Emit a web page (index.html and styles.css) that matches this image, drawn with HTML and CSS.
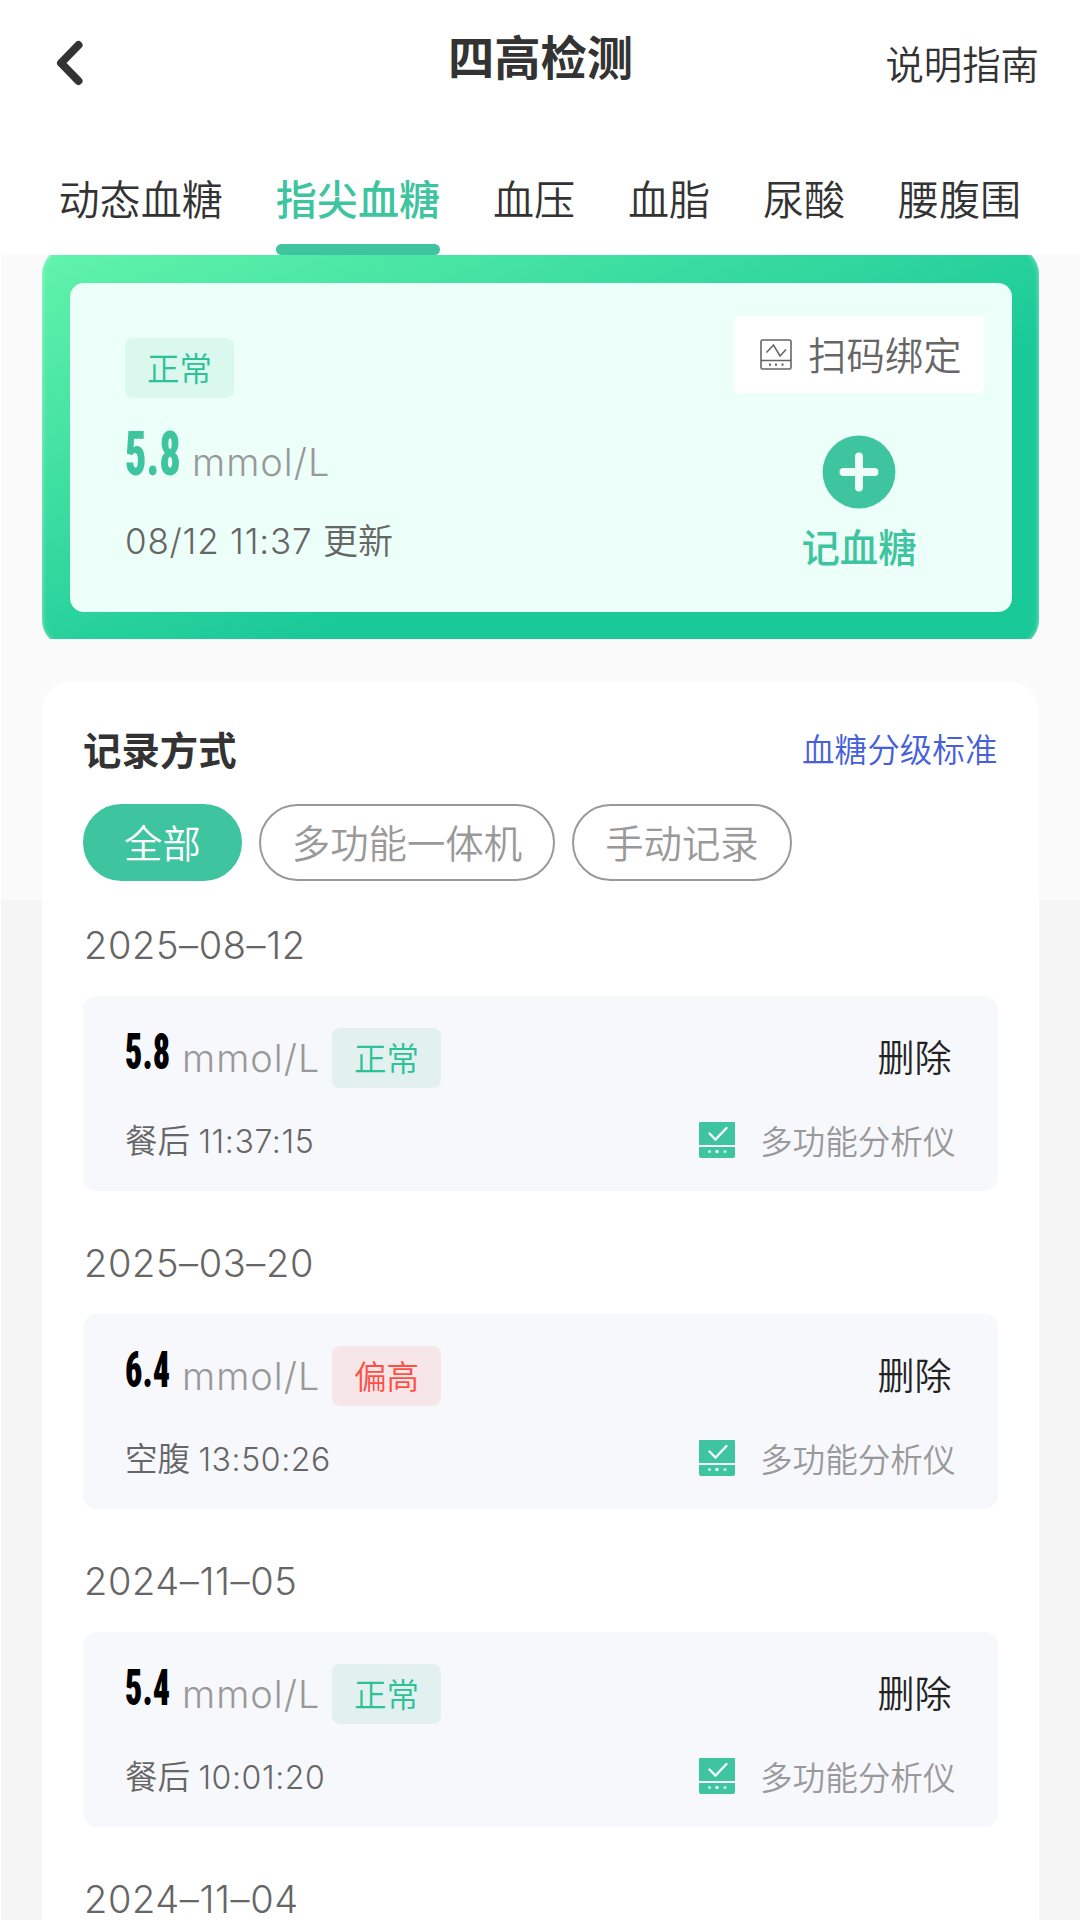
FILE: index.html
```html
<!DOCTYPE html>
<html lang="zh-CN">
<head>
    <meta charset="UTF-8">
    <meta name="viewport" content="width=device-width, initial-scale=1.0">
    <title>四高检测</title>
    <link rel="stylesheet" href="styles.css">
</head>
<body>
    <!-- shared icon for the record rows -->
    <svg class="sprite" width="0" height="0">
        <symbol id="device" viewBox="0 0 38 38">
            <path d="M2 1h34a1 1 0 0 1 1 1v22H1V2a1 1 0 0 1 1-1zM1 26h36v9a2 2 0 0 1-2 2H3a2 2 0 0 1-2-2z" fill="#3ec49f"/>
            <path d="M11.5 12.5l6 6L28.5 7" fill="none" stroke="#f7f8fc" stroke-width="2.4" stroke-linecap="round"/>
            <circle cx="11.5" cy="30.5" r="1.6" fill="#c5ede2"/>
            <circle cx="19" cy="30.5" r="1.8" fill="#e5f7f3"/>
            <circle cx="27" cy="30.5" r="1.6" fill="#c5ede2"/>
        </symbol>
    </svg>
    <header class="header">
        <div class="navbar">
            <a class="back">
                <svg width="32" height="50" viewBox="0 0 32 50"><path d="M24.500 7L7 25L24.500 43" fill="none" stroke="#333" stroke-width="8" stroke-linecap="round" stroke-linejoin="round"/></svg>
            </a>
            <h1>四高检测</h1>
            <a class="guide">说明指南</a>
        </div>
        <nav class="tabs">
            <a>动态血糖</a>
            <a class="active">指尖血糖</a>
            <a>血压</a>
            <a>血脂</a>
            <a>尿酸</a>
            <a>腰腹围</a>
        </nav>
    </header>
    <main class="main">
        <section class="summary">
            <div class="summary-inner">
                <div class="summary-left">
                    <span class="tag">正常</span>
                    <div class="reading"><span class="value"><b>5.8</b></span><span class="unit">mmol/L</span></div>
                    <div class="updated">08/12 11:37 <span>更新</span></div>
                </div>
                <div class="summary-right">
                    <a class="scan">
                        <svg width="32" height="32" viewBox="0 0 32 32" fill="none" stroke="#666" stroke-width="1.6">
                            <rect x="1" y="1" width="30" height="29" rx="1.500"/>
                            <path d="M1 21.500h30M6.500 13.500l7-7.500 6.500 11 6-6.500"/>
                            <path d="M9 25.700h2M15 25.700h2M21.500 25.700h2" stroke-width="2.2"/>
                        </svg>
                        <span>扫码绑定</span>
                    </a>
                    <a class="add">
                        <svg width="74" height="74" viewBox="0 0 74 74">
                            <circle cx="37" cy="37" r="36.400" fill="#3ec49f"/>
                            <path d="M37 21.500v31M21.500 37h31" stroke="#edfff9" stroke-width="8" stroke-linecap="round"/>
                        </svg>
                        <span>记血糖</span>
                    </a>
                </div>
            </div>
        </section>
        <section class="records">
            <div class="records-head">
                <h2>记录方式</h2>
                <a>血糖分级标准</a>
            </div>
            <div class="filters">
                <a class="active">全部</a>
                <a>多功能一体机</a>
                <a>手动记录</a>
            </div>
            <h3 class="date">2025–08–12</h3>
            <div class="record">
                <div class="row">
                    <span class="value"><b>5.8</b></span><span class="unit">mmol/L</span><span class="tag">正常</span>
                    <a class="delete">删除</a>
                </div>
                <div class="row row-info">
                    <span class="time">餐后 <i>11:37:15</i></span>
                    <span class="source"><svg width="38" height="38"><use href="#device"/></svg>多功能分析仪</span>
                </div>
            </div>
            <h3 class="date">2025–03–20</h3>
            <div class="record">
                <div class="row">
                    <span class="value"><b>6.4</b></span><span class="unit">mmol/L</span><span class="tag high">偏高</span>
                    <a class="delete">删除</a>
                </div>
                <div class="row row-info">
                    <span class="time">空腹 <i>13:50:26</i></span>
                    <span class="source"><svg width="38" height="38"><use href="#device"/></svg>多功能分析仪</span>
                </div>
            </div>
            <h3 class="date">2024–11–05</h3>
            <div class="record">
                <div class="row">
                    <span class="value"><b>5.4</b></span><span class="unit">mmol/L</span><span class="tag">正常</span>
                    <a class="delete">删除</a>
                </div>
                <div class="row row-info">
                    <span class="time">餐后 <i>10:01:20</i></span>
                    <span class="source"><svg width="38" height="38"><use href="#device"/></svg>多功能分析仪</span>
                </div>
            </div>
            <h3 class="date">2024–11–04</h3>
        </section>
    </main>
</body>
</html>
```

FILE: styles.css
```css
* {
    box-sizing: border-box;
}
body {
    margin: 0;
    width: 1080px;
    height: 1920px;
    overflow: hidden;
    font-family: "Noto Sans CJK SC", sans-serif;
    font-size: 38.4px;
    font-weight: 350;
    color: #333;
    background-color: #fff;
}
h1, h2, h3 {
    margin: 0;
}
svg {
    display: block;
    flex-shrink: 0;
}
.sprite {
    display: none;
}
.header {
    height: 255px;
    background-color: #fff;
}
.navbar {
    display: grid;
    grid-template-columns: 1fr auto 1fr;
    height: 128px;
    padding: 0 41px 0 54px;
    align-items: center;
}
.navbar h1 {
    font-size: 46.3px;
    line-height: 60px;
    padding-bottom: 19px;
    margin-left: -12px;
}
.navbar .guide {
    justify-self: end;
    padding-bottom: 4px;
    line-height: 50px;
}
.back {
    padding-bottom: 2px;
}
.tabs {
    display: flex;
    gap: 52.8px;
    height: 127px;
    padding: 0 0 0 58.5px;
}
.tabs a {
    display: flex;
    flex-direction: column;
    justify-content: space-between;
    line-height: 60px;
    padding-top: 39px;
    font-size: 41.1px;
    white-space: nowrap;
}
.tabs .active {
    color: #3ec49f;
    font-weight: 500;
}
.tabs .active::after {
    content: "";
    height: 11px;
    border-radius: 6px;
    background-color: #3ec49f;
}
.main {
    margin-left: 1px;
    padding: 0 41px;
    height: 1665px;
    background: linear-gradient(#fafafa 645px, #f5f5f5 645px);
}
.summary {
    position: relative;
    height: 384px;
    padding: 28px 27px 27px 28px;
    overflow: hidden;
}
/* gradient frame runs a little past the clipped top and bottom */
.summary::before {
    content: "";
    position: absolute;
    inset: -8px 0;
    border-radius: 27px;
    background: linear-gradient(to bottom right, #62f4ab, #1ac998 62%);
    box-shadow: inset 0 0 5px rgba(255, 255, 255, 0.5);
}
.summary-inner {
    position: relative;
    display: flex;
    justify-content: space-between;
    height: 329px;
    padding: 33px 28px 0 55px;
    border-radius: 14px;
    background-color: #edfff9;
}
.summary-left {
    padding-top: 22px;
}
.tag {
    display: block;
    width: 109px;
    height: 60px;
    border-radius: 8px;
    background-color: #dbf8ee;
    color: #2cc196;
    font-size: 32.5px;
    line-height: 57px;
    text-align: center;
}
.reading {
    display: flex;
    height: 110px;
    color: #3ec49f;
}
/* condensed digits */
.value {
    width: 67px;
    font-family: Roboto, sans-serif;
    font-size: 62px;
    line-height: 112px;
}
.value b {
    display: inline-block;
    font-weight: 900;
    font-stretch: 75%;
    transform: scaleX(0.68);
    transform-origin: left;
}
.unit {
    color: #999;
    font-family: Inter, sans-serif;
    font-weight: 350;
    font-size: 38px;
    line-height: 128px;
    letter-spacing: 1px;
}
.updated {
    color: #666;
    font-family: Inter, "Noto Sans CJK SC", sans-serif;
    font-weight: 350;
    font-size: 35px;
    line-height: 66px;
    letter-spacing: 0.8px;
}
.updated span {
    letter-spacing: 0;
}
.scan {
    display: flex;
    align-items: center;
    width: 250px;
    height: 77px;
    padding-left: 26px;
    gap: 16px;
    border-radius: 5px;
    background-color: #fff;
    color: #666;
    line-height: 73px;
}
.scan span {
    padding-bottom: 3px;
}
.add {
    display: flex;
    flex-direction: column;
    align-items: center;
    padding-top: 42px;
    color: #3ec49f;
    font-weight: 500;
    line-height: 72px;
}
.records {
    height: 1240px;
    margin-top: 42px;
    padding: 37px 41.5px 0 41px;
    border-radius: 30px 30px 0 0;
    background-color: #fff;
}
.records-head {
    display: flex;
    justify-content: space-between;
    align-items: center;
    height: 60px;
}
.records-head h2 {
    font-size: 38.4px;
    font-weight: 700;
}
.records-head a {
    padding-bottom: 2px;
    color: #4660dc;
    font-size: 32.6px;
}
.filters {
    display: flex;
    gap: 17px;
    padding-top: 26px;
}
.filters a {
    height: 77px;
    padding: 0 31px;
    border: 2.5px solid #999;
    border-radius: 39px;
    color: #999;
    line-height: 71px;
}
.filters .active {
    padding: 0 39px;
    border-color: #3ec49f;
    background-color: #3ec49f;
    color: #fff;
}
.date {
    height: 115px;
    padding-left: 1px;
    color: #666;
    font-family: Inter, sans-serif;
    font-weight: 350;
    font-size: 38px;
    line-height: 128px;
    letter-spacing: 0.6px;
}
.record {
    height: 195px;
    margin-bottom: 8px;
    padding: 32px 42px 0;
    border-radius: 14px;
    background-color: #f7f8fc;
}
.row {
    display: flex;
    height: 60px;
}
.record .value {
    width: 57px;
    color: #000;
    font-size: 50px;
    line-height: 49px;
}
.record .unit {
    width: 150px;
    line-height: 60px;
}
.record .tag {
    background-color: #e2f1f0;
}
.record .tag.high {
    background-color: #f7e6e8;
    color: #ff4f45;
}
.delete {
    margin-left: auto;
    padding-right: 4px;
    color: #222;
    font-size: 37px;
    line-height: 57px;
}
.row-info {
    justify-content: space-between;
    align-items: center;
    margin-top: 22px;
    font-size: 32.6px;
}
.time {
    padding-bottom: 3px;
    color: #666;
}
.time i {
    margin-left: 1px;
    font-family: Inter, sans-serif;
    font-style: normal;
    font-weight: 350;
    font-size: 32px;
    letter-spacing: 0.6px;
}
.source {
    display: flex;
    align-items: center;
    gap: 24px;
    color: #999;
    line-height: 46px;
}
```
